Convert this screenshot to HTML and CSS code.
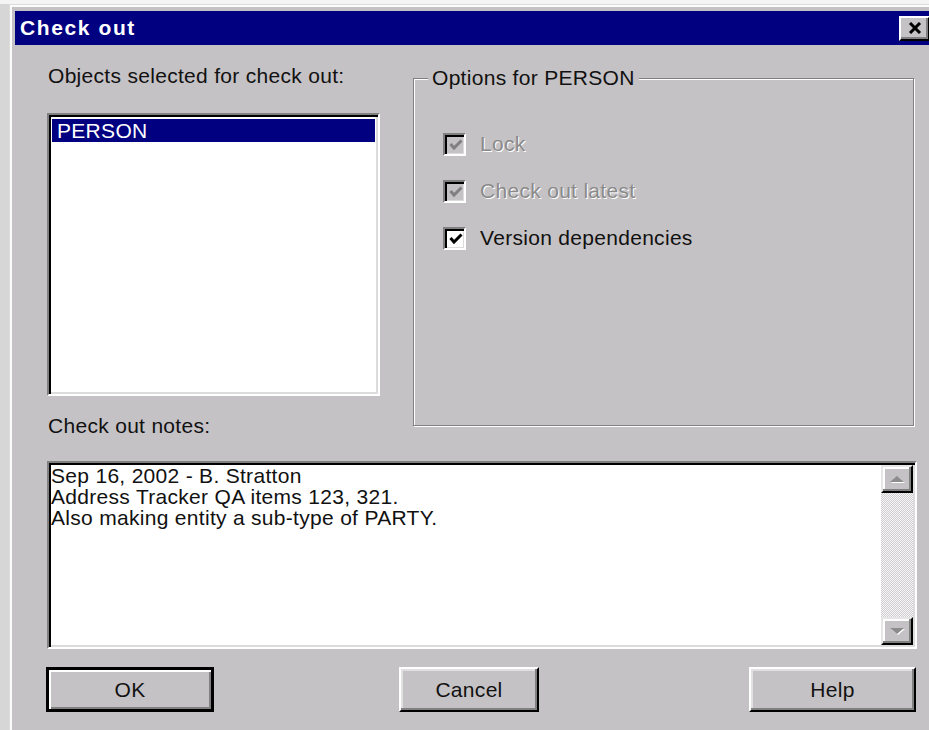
FILE: index.html
```html
<!DOCTYPE html>
<html>
<head>
<meta charset="utf-8">
<title>Check out</title>
<link rel="stylesheet" href="styles.css">
</head>
<body>
<div class="window">
  <div class="titlebar">
    <span class="title">Check out</span>
    <button class="close" type="button" aria-label="Close">
      <svg width="14" height="12" viewBox="0 0 14 12"><path d="M2 1 L12 11 M12 1 L2 11" stroke="#000" stroke-width="3" fill="none"/></svg>
    </button>
  </div>
  <div class="content">
    <div class="top">
      <div class="left">
        <div class="label">Objects selected for check out:</div>
        <div class="listbox sunken">
          <div class="item selected">PERSON</div>
        </div>
        <div class="label notes-label">Check out notes:</div>
      </div>
      <fieldset class="group">
        <legend>Options for PERSON</legend>
        <div class="check disabled first">
          <span class="box"><svg width="14" height="12" viewBox="0 0 14 12"><polyline points="1.5,5 5,9 12.5,1.5" stroke="currentColor" stroke-width="3" fill="none"/></svg></span>
          <span class="text">Lock</span>
        </div>
        <div class="check disabled">
          <span class="box"><svg width="14" height="12" viewBox="0 0 14 12"><polyline points="1.5,5 5,9 12.5,1.5" stroke="currentColor" stroke-width="3" fill="none"/></svg></span>
          <span class="text">Check out latest</span>
        </div>
        <div class="check">
          <span class="box"><svg width="14" height="12" viewBox="0 0 14 12"><polyline points="1.5,5 5,9 12.5,1.5" stroke="currentColor" stroke-width="3" fill="none"/></svg></span>
          <span class="text">Version dependencies</span>
        </div>
      </fieldset>
    </div>
    <div class="notes sunken">
      <div class="notes-text">Sep 16, 2002 - B. Stratton<br>Address Tracker QA items 123, 321.<br>Also making entity a sub-type of PARTY.</div>
      <div class="scrollbar">
        <div class="arrow"><span class="tri up"></span></div>
        <div class="track"></div>
        <div class="arrow"><span class="tri down"></span></div>
      </div>
    </div>
    <div class="buttons">
      <button class="btn default" type="button">OK</button>
      <button class="btn cancel" type="button">Cancel</button>
      <button class="btn help" type="button">Help</button>
    </div>
  </div>
</div>
</body>
</html>
```
FILE: styles.css
```css
html, body {
  margin: 0;
  padding: 0;
}

body {
  width: 929px;
  height: 730px;
  overflow: hidden;
  background: #d6d6d6;
  border-top: 4px solid #f4f4f4;
  box-sizing: border-box;
  font-family: "Liberation Sans", Arial, sans-serif;
  font-size: 21px;
  letter-spacing: 0.3px;
  color: #111;
}

/* dialog frame */
.window {
  margin-left: 9px;
  width: 926px;
  height: 740px;
  background: #c5c2c5;
  border-top: 1px solid #dcdcdc;
  border-left: 1px solid #dcdcdc;
  box-shadow: inset 2px 2px #fbfbfb;
  padding: 6px 0 0 5px;
  box-sizing: border-box;
}

.titlebar {
  height: 34px;
  background: #000080;
  display: flex;
  align-items: center;
  padding-left: 5px;
}

.title {
  color: #fff;
  font-weight: bold;
  letter-spacing: 1.6px;
  line-height: 34px;
}

.close {
  margin-left: auto;
  margin-right: 5px;
  width: 31px;
  height: 25px;
  padding: 0;
  background: #c5c2c5;
  border: 2px solid;
  border-color: #fff #000 #000 #fff;
  box-shadow: inset -2px -2px #808080;
  display: flex;
  align-items: center;
  justify-content: center;
}

.content {
  padding: 19px 0 0 32px;
}

.top {
  display: flex;
  align-items: flex-start;
}

.left {
  width: 333px;
  display: flex;
  flex-direction: column;
}

.label {
  line-height: 24px;
  padding-left: 1px;
}

/* sunken well used by the list and the notes box */
.sunken {
  background: #fff;
  border: 2px solid;
  border-color: #808080 #fff #fff #808080;
  box-shadow: inset 2px 2px #000, inset -2px -2px #dcdcdc;
  box-sizing: border-box;
}

.listbox {
  margin-top: 25px;
  height: 283px;
  padding: 4px 3px;
}

.item {
  height: 23px;
  line-height: 23px;
  padding-left: 5px;
}

.item.selected {
  background: #000080;
  color: #fff;
}

.notes-label {
  margin-top: 18px;
}

/* etched group box */
.group {
  margin: 2px 0 0 33px;
  width: 501px;
  height: 360px;
  box-sizing: border-box;
  border: 1px solid #808080;
  box-shadow: inset 1px 1px #fff, 1px 1px #fff;
  padding: 0 0 0 14px;
  min-width: 0;
}

.group legend {
  padding: 0 4px;
  line-height: 24px;
  background: #c5c2c5;
}

.check {
  display: flex;
  align-items: center;
  height: 24px;
  margin-left: 15px;
  margin-top: 23px;
}

.check.first {
  margin-top: 42px;
}

.box {
  width: 23px;
  height: 23px;
  box-sizing: border-box;
  border: 2px solid;
  border-color: #808080 #fff #fff #808080;
  box-shadow: inset 2px 2px #000, inset -1px -1px #dcdcdc;
  background: #fff;
  color: #000;
  display: flex;
  align-items: center;
  justify-content: center;
  padding: 2px 0 0 2px;
}

.check .text {
  margin-left: 14px;
}

.check.disabled .box {
  background: #c5c2c5;
  color: #808080;
}

.check.disabled .text {
  color: #8a8a8a;
  text-shadow: 1px 1px #fff;
}

/* notes editor */
.notes {
  margin-top: 23px;
  width: 870px;
  height: 188px;
  display: flex;
}

.notes-text {
  flex: 1;
  padding: 2px 0 0 2px;
  line-height: 21px;
}

.scrollbar {
  width: 32px;
  display: flex;
  flex-direction: column;
  margin: 2px 2px 2px 0;
}

.track {
  flex: 1;
  background: repeating-conic-gradient(#cfcdcf 0 25%, #f6f6f6 0 50%) 0 0 / 2px 2px;
}

.arrow {
  height: 28px;
  box-sizing: border-box;
  background: #c5c2c5;
  border: 2px solid;
  border-color: #e6e6e6 #000 #000 #e6e6e6;
  box-shadow: inset -2px -2px #808080, inset 2px 2px #fff;
  display: flex;
  align-items: center;
  justify-content: center;
}

.tri {
  width: 0;
  height: 0;
  border-left: 7px solid transparent;
  border-right: 7px solid transparent;
  filter: drop-shadow(1px 1px 0 #fff);
}

.tri.up {
  border-bottom: 6px solid #8c8c8c;
}

.tri.down {
  border-top: 6px solid #8c8c8c;
}

/* dialog buttons */
.buttons {
  margin-top: 18px;
  display: flex;
  align-items: flex-start;
}

.btn {
  height: 45px;
  background: #c5c2c5;
  font: inherit;
  letter-spacing: inherit;
  color: #111;
  border: 2px solid;
  border-color: #fff #000 #000 #fff;
  box-shadow: inset -2px -2px #808080, inset 2px 2px #e0e0e0;
  padding: 0;
}

.btn.default {
  width: 168px;
  margin-left: -1px;
  border: 3px solid #000;
  box-shadow: inset 2px 2px #fff, inset -2px -2px #808080;
}

.btn.cancel {
  width: 140px;
  margin-left: 185px;
}

.btn.help {
  width: 167px;
  margin-left: 210px;
}
```
